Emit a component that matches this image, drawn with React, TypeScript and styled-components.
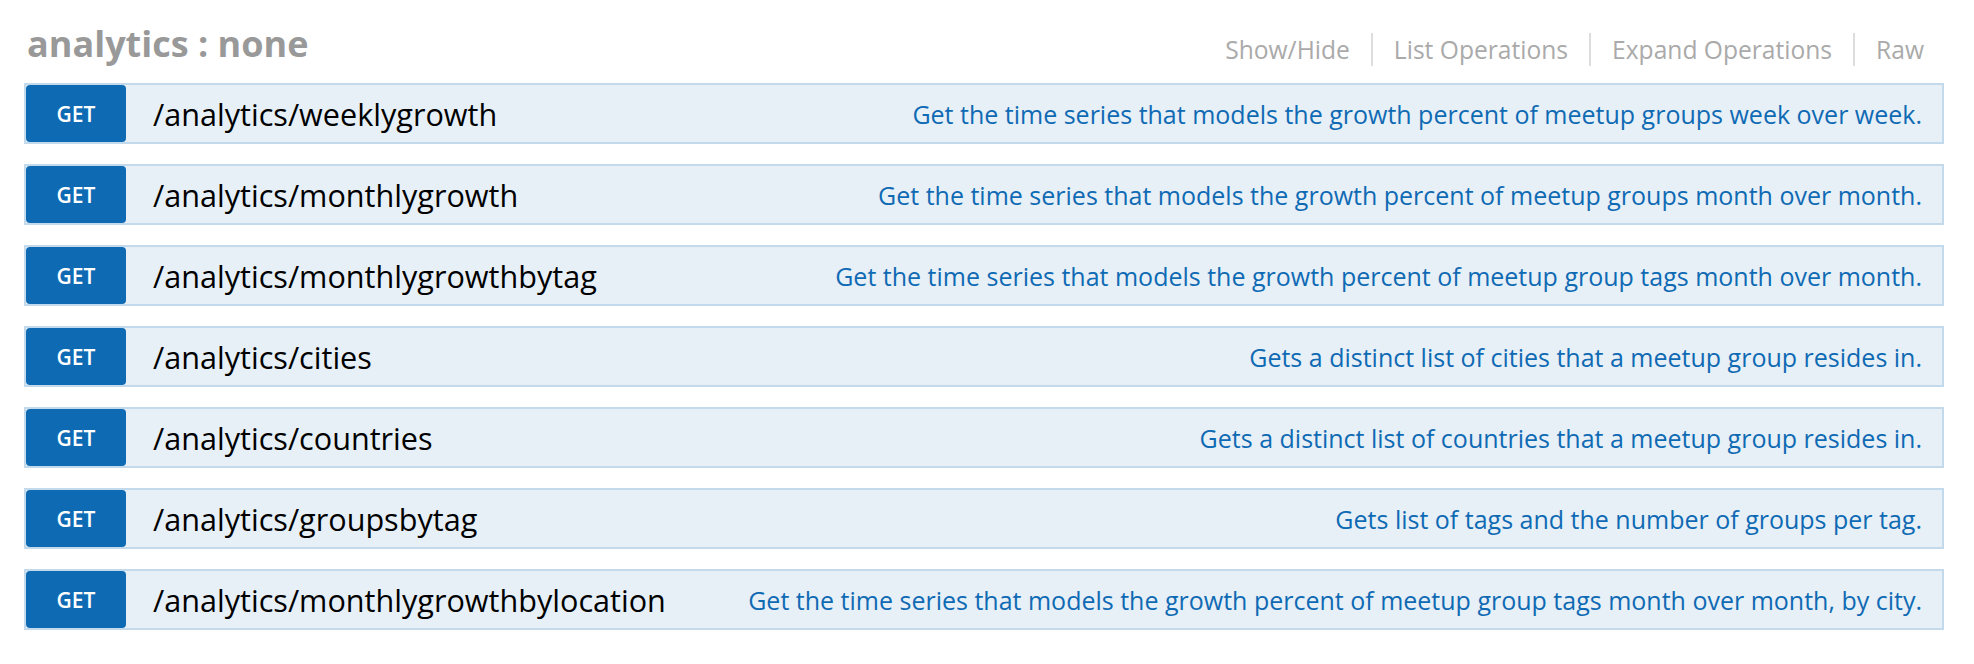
import React from "react";
import styled, { createGlobalStyle } from "styled-components";

const GlobalStyle = createGlobalStyle`
  body {
    margin: 0;
    background: #fff;
    font-family: "Open Sans", "DejaVu Sans", sans-serif;
  }
`;

const Page = styled.div`
  padding: 24px 30px 0 24px;
`;

const Header = styled.div`
  display: flex;
  align-items: baseline;
  justify-content: space-between;
  margin-bottom: 19px;
`;

const Title = styled.h2`
  margin: 0 0 0 3px;
  font-size: 36px;
  line-height: 40px;
  font-weight: 700;
  color: #999;
`;

const Options = styled.ul`
  display: flex;
  margin: 0;
  padding: 0;
  list-style: none;
  transform: translateY(2px);
`;

const Option = styled.li<{ $last?: boolean }>`
  padding: 0 21px;
  font-size: 24.6px;
  line-height: 33px;
  color: #aaa;
  border-right: ${(p) => (p.$last ? "none" : "2px solid #ddd")};
  padding-right: ${(p) => (p.$last ? "20px" : "21px")};
`;

const Row = styled.div`
  display: flex;
  align-items: center;
  height: 61px;
  box-sizing: border-box;
  margin-bottom: 20px;
  background: #e7f0f7;
  border: 2px solid #c3d9ec;
`;

const Method = styled.span`
  display: flex;
  align-items: center;
  justify-content: center;
  align-self: stretch;
  width: 100px;
  flex-shrink: 0;
  background: #0f6ab4;
  border-radius: 4px;
  color: #fff;
  font-size: 21px;
  font-weight: 600;
`;

const Path = styled.span`
  margin-left: 27px;
  font-size: 30.6px;
  color: #000;
  white-space: nowrap;
`;

const Summary = styled.span`
  margin-left: auto;
  padding-right: 20px;
  font-size: 25px;
  color: #0f6ab4;
  white-space: nowrap;
`;

const endpoints = [
  {
    path: "/analytics/weeklygrowth",
    summary:
      "Get the time series that models the growth percent of meetup groups week over week.",
  },
  {
    path: "/analytics/monthlygrowth",
    summary:
      "Get the time series that models the growth percent of meetup groups month over month.",
  },
  {
    path: "/analytics/monthlygrowthbytag",
    summary:
      "Get the time series that models the growth percent of meetup group tags month over month.",
  },
  {
    path: "/analytics/cities",
    summary: "Gets a distinct list of cities that a meetup group resides in.",
  },
  {
    path: "/analytics/countries",
    summary: "Gets a distinct list of countries that a meetup group resides in.",
  },
  {
    path: "/analytics/groupsbytag",
    summary: "Gets list of tags and the number of groups per tag.",
  },
  {
    path: "/analytics/monthlygrowthbylocation",
    summary:
      "Get the time series that models the growth percent of meetup group tags month over month, by city.",
  },
];

const options = ["Show/Hide", "List Operations", "Expand Operations", "Raw"];

const App = () => (
  <>
    <GlobalStyle />
    <Page>
      <Header>
        <Title>analytics : none</Title>
        <Options>
          {options.map((o, i) => (
            <Option key={o} $last={i === options.length - 1}>
              {o}
            </Option>
          ))}
        </Options>
      </Header>
      {endpoints.map((e) => (
        <Row key={e.path}>
          <Method>GET</Method>
          <Path>{e.path}</Path>
          <Summary>{e.summary}</Summary>
        </Row>
      ))}
    </Page>
  </>
);

export default App;
